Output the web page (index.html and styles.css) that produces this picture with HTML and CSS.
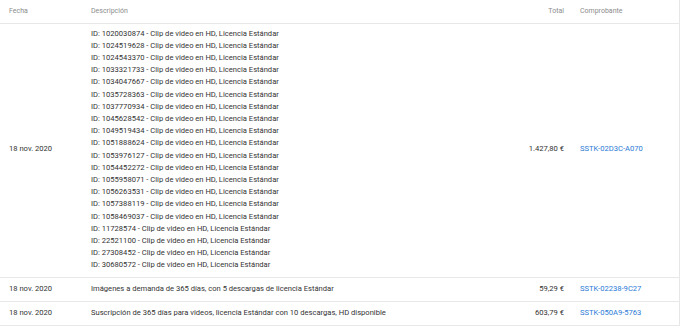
FILE: index.html
```html
<!DOCTYPE html>
<html lang="es">
<head>
<meta charset="utf-8">
<link rel="stylesheet" href="styles.css">
</head>
<body>
<table class="orders">
  <colgroup>
    <col class="c-date">
    <col class="c-desc">
    <col class="c-total">
    <col class="c-inv">
  </colgroup>
  <thead>
    <tr>
      <th class="date">Fecha</th>
      <th class="desc">Descripción</th>
      <th class="total">Total</th>
      <th class="inv">Comprobante</th>
    </tr>
  </thead>
  <tbody>
    <tr class="big">
      <td class="date">18 nov. 2020</td>
      <td class="desc">
        <div class="line">ID: 1020030874 - Clip de video en HD, Licencia Estándar</div>
        <div class="line">ID: 1024519628 - Clip de video en HD, Licencia Estándar</div>
        <div class="line">ID: 1024543370 - Clip de video en HD, Licencia Estándar</div>
        <div class="line">ID: 1033321733 - Clip de video en HD, Licencia Estándar</div>
        <div class="line">ID: 1034047667 - Clip de video en HD, Licencia Estándar</div>
        <div class="line">ID: 1035728363 - Clip de video en HD, Licencia Estándar</div>
        <div class="line">ID: 1037770934 - Clip de video en HD, Licencia Estándar</div>
        <div class="line">ID: 1045628542 - Clip de video en HD, Licencia Estándar</div>
        <div class="line">ID: 1049519434 - Clip de video en HD, Licencia Estándar</div>
        <div class="line">ID: 1051888624 - Clip de video en HD, Licencia Estándar</div>
        <div class="line">ID: 1053976127 - Clip de video en HD, Licencia Estándar</div>
        <div class="line">ID: 1054452272 - Clip de video en HD, Licencia Estándar</div>
        <div class="line">ID: 1055958071 - Clip de video en HD, Licencia Estándar</div>
        <div class="line">ID: 1056263531 - Clip de video en HD, Licencia Estándar</div>
        <div class="line">ID: 1057388119 - Clip de video en HD, Licencia Estándar</div>
        <div class="line">ID: 1058469037 - Clip de video en HD, Licencia Estándar</div>
        <div class="line">ID: 11728574 - Clip de video en HD, Licencia Estándar</div>
        <div class="line">ID: 22521100 - Clip de video en HD, Licencia Estándar</div>
        <div class="line">ID: 27308452 - Clip de video en HD, Licencia Estándar</div>
        <div class="line">ID: 30680572 - Clip de video en HD, Licencia Estándar</div>
      </td>
      <td class="total">1.427,80 €</td>
      <td class="inv"><a href="#">SSTK-02D3C-A070</a></td>
    </tr>
    <tr>
      <td class="date">18 nov. 2020</td>
      <td class="desc">Imágenes a demanda de 365 días, con 5 descargas de licencia Estándar</td>
      <td class="total">59,29 €</td>
      <td class="inv"><a href="#">SSTK-02238-9C27</a></td>
    </tr>
    <tr>
      <td class="date">18 nov. 2020</td>
      <td class="desc">Suscripción de 365 días para videos, licencia Estándar con 10 descargas, HD disponible</td>
      <td class="total">603,79 €</td>
      <td class="inv"><a href="#">SSTK-050A9-5763</a></td>
    </tr>
  </tbody>
</table>
</body>
</html>
```
FILE: styles.css
```css
html, body {
  margin: 0;
  padding: 0;
  background: #ffffff;
}
body {
  font-family: Roboto, "Liberation Sans", Arial, sans-serif;
  color: #333333;
}
.orders {
  width: 679px;
  border-collapse: collapse;
  table-layout: fixed;
  border-right: 1px solid #e6e6e6;
}
.c-date { width: 82px; }
.c-desc { width: 418px; }
.c-total { width: 72px; }
.c-inv { width: 107px; }

.orders th {
  height: 23px;
  padding: 0 8px;
  font-size: 7px;
  font-weight: 400;
  color: #8c8c8c;
  text-align: left;
  vertical-align: middle;
  border-bottom: 1px solid #e8e8e8;
  box-sizing: border-box;
}
.orders td {
  height: 24px;
  padding: 0 8px;
  font-size: 7.6px;
  line-height: 12.2px;
  vertical-align: middle;
  border-bottom: 1px solid #e8e8e8;
  white-space: nowrap;
  box-sizing: border-box;
}
.orders .date { padding-left: 9px; }
.orders .desc { padding-left: 9px; }
.orders .total { text-align: right; }
.orders tr.big td { padding-top: 4px; padding-bottom: 5px; }
.orders .inv a {
  color: #2b7bd6;
  text-decoration: none;
}
```
